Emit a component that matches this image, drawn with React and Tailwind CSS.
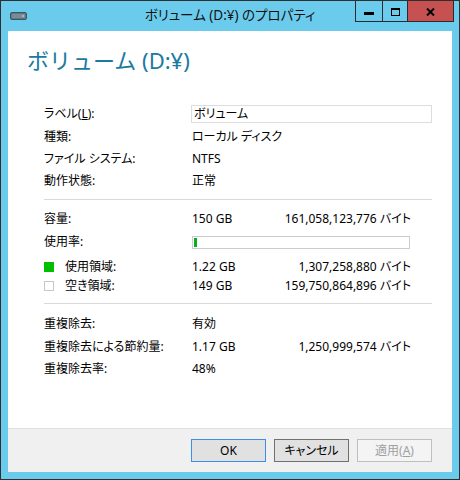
import React from 'react'

// ── small pieces ─────────────────────────────────────────────

function DriveIcon() {
  return (
    <svg width="17" height="8" viewBox="0 0 17 8">
      <rect x="0.5" y="0.5" width="16" height="7" rx="1.5" fill="#5f7785" stroke="#3e5563" />
      <rect x="2" y="2" width="13" height="4" fill="#768d9a" />
      <rect x="12" y="3.5" width="2" height="1" fill="#c9e3ee" />
    </svg>
  )
}

function Row({ label, children, h = 'h-[22px]' }) {
  return (
    <div className={`grid grid-cols-[148px_1fr] items-center ${h}`}>
      <div>{label}</div>
      <div>{children}</div>
    </div>
  )
}

function SizeRow({ size, bytes }) {
  return (
    <div className="flex w-[219px] justify-between">
      <span>{size}</span>
      <span>{bytes} バイト</span>
    </div>
  )
}

const Sep = ({ mt }) => <div className={`${mt} border-t border-[#d9d9d9]`} />

// ── window ───────────────────────────────────────────────────

export default function App() {
  return (
    <div className="w-[460px] h-[480px] bg-[#6bcbec] border border-[#2f2f2f] flex flex-col font-['Noto_Sans','Noto_Sans_CJK_JP',sans-serif] [font-feature-settings:'palt'] text-black">

      {/* title bar */}
      <div className="h-[30px] grid grid-cols-[1fr_auto_1fr]">
        <div className="pl-[9px] pt-[11px]">
          <DriveIcon />
        </div>
        <div className="text-[13.5px] leading-[29px] text-[#111]">ボリューム (D:¥) のプロパティ</div>
        <div className="flex justify-end pr-[5px]">
          <div className="flex h-[21px] border-x border-b border-[#2b2b2b]">
            <div className="w-[27px] flex items-center justify-center border-r border-[#2b2b2b]">
              <div className="w-[10px] h-[3px] bg-black mt-[5px]" />
            </div>
            <div className="w-[25px] flex items-center justify-center border-r border-[#2b2b2b]">
              <div className="w-[9px] h-[8px] border border-black border-t-2 mt-[2px]" />
            </div>
            <div className="w-[45px] bg-[#c75050] flex items-center justify-center">
              <svg width="9" height="8" viewBox="0 0 9 8" className="mt-[2px]">
                <path d="M1 0.5 L8 7.5 M8 0.5 L1 7.5" stroke="#000" strokeWidth="2" />
              </svg>
            </div>
          </div>
        </div>
      </div>

      {/* client area */}
      <div className="flex-1 flex flex-col px-[7px] pb-[7px]">
        <div className="h-[397px] bg-white">
          <h1 className="pl-[19px] pt-[14px] text-[22px] leading-[30px] text-[#1a7aa0] font-normal [font-feature-settings:normal]">
            ボリューム (D:¥)
          </h1>

          <div className="pl-[36px] pr-[20px] text-[12px] mt-[27px]">
            {/* general */}
            <Row h="h-[24px]" label={<>ラベル(<span className="underline">L</span>):</>}>
              <div className="-ml-px h-[18px] border border-[#dcdce2] pl-[2px] leading-[16px]">ボリューム</div>
            </Row>
            <Row label="種類:">ローカル ディスク</Row>
            <Row label="ファイル システム:">NTFS</Row>
            <Row label="動作状態:">正常</Row>

            <Sep mt="mt-[7px]" />

            {/* capacity */}
            <div className="mt-[8px]">
              <Row label="容量:">
                <SizeRow size="150 GB" bytes="161,058,123,776" />
              </Row>
              <Row h="h-[24px]" label="使用率:">
                <div className="w-[218px] h-[13px] border border-[#cccccc] bg-white p-px">
                  <div className="w-[3px] h-full bg-[#06b025]" />
                </div>
              </Row>
              <div className="mt-[3px]">
                <Row
                  h="h-[19px]"
                  label={
                    <div className="flex items-center">
                      <div className="w-[10px] h-[10px] bg-[#00be00]" />
                      <span className="ml-[11px]">使用領域:</span>
                    </div>
                  }
                >
                  <SizeRow size="1.22 GB" bytes="1,307,258,880" />
                </Row>
                <Row
                  h="h-[19px]"
                  label={
                    <div className="flex items-center">
                      <div className="w-[10px] h-[10px] border border-[#c8c8c8] bg-white" />
                      <span className="ml-[11px]">空き領域:</span>
                    </div>
                  }
                >
                  <SizeRow size="149 GB" bytes="159,750,864,896" />
                </Row>
              </div>
            </div>

            <Sep mt="mt-[8px]" />

            {/* deduplication */}
            <div className="mt-[9px]">
              <Row label="重複除去:">有効</Row>
              <Row h="h-[23px]" label="重複除去による節約量:">
                <SizeRow size="1.17 GB" bytes="1,250,999,574" />
              </Row>
              <Row label="重複除去率:">48%</Row>
            </div>
          </div>
        </div>

        {/* footer */}
        <div className="flex-1 bg-[#f0f0f0] border-t border-[#dfdfdf] flex justify-end items-start gap-[8px] pt-[10px] pr-[20px] text-[12px]">
          <button className="w-[75px] h-[23px] bg-[#e1e1e1] border border-[#3d8ee6] leading-[21px]">OK</button>
          <button className="w-[75px] h-[23px] bg-[#e1e1e1] border border-[#707070] leading-[21px]">キャンセル</button>
          <button className="w-[75px] h-[23px] bg-[#f4f4f4] border border-[#bfbfbf] text-[#a0a0a0] leading-[21px]">
            適用(<span className="underline">A</span>)
          </button>
        </div>
      </div>
    </div>
  )
}
